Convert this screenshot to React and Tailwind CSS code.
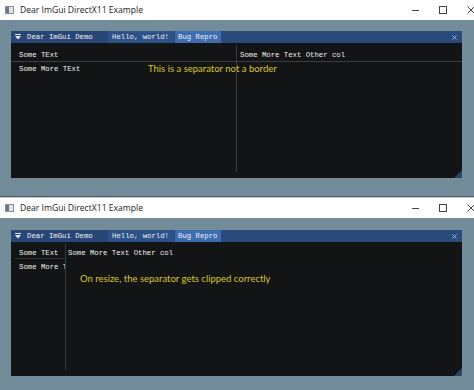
import React from "react";

const MONO = "font-[family-name:'Liberation_Mono',monospace] text-[7.3px]";
const SANS = "font-[family-name:'Open_Sans',sans-serif]";
const NOTE = "font-[family-name:Lato,sans-serif] text-[9.5px] leading-[10px] text-[#dcc42e] whitespace-nowrap";

const OsTitleBar = () => (
  <div className="h-[20px] bg-white flex items-center shrink-0">
    <svg width="9" height="8" viewBox="0 0 9 8" className="ml-[5px]">
      <rect x="0.5" y="0.5" width="8" height="7" fill="#dfe3e8" stroke="#8a9099" />
      <rect x="1" y="1" width="3" height="6" fill="#6d7682" />
    </svg>
    <span className={`ml-[6px] text-[8.6px] leading-[20px] text-[#1b1b1b] ${SANS}`}>
      Dear ImGui DirectX11 Example
    </span>
    <div className="ml-auto mr-[-1px] flex items-center gap-[20px]">
      <svg width="7" height="8" viewBox="0 0 7 8">
        <line x1="0" y1="4.5" x2="7" y2="4.5" stroke="#444" strokeWidth="1" />
      </svg>
      <svg width="8" height="8" viewBox="0 0 8 8">
        <rect x="0.5" y="0.5" width="7" height="7" fill="none" stroke="#444" strokeWidth="1" />
      </svg>
      <svg width="8" height="8" viewBox="0 0 8 8">
        <path d="M0.5 0.5 L7.5 7.5 M7.5 0.5 L0.5 7.5" stroke="#444" strokeWidth="1" />
      </svg>
    </div>
  </div>
);

const DockIcon = () => (
  <svg width="6" height="6" viewBox="0 0 6 6">
    <rect x="0" y="0" width="6" height="1" fill="#e8e8e8" />
    <path d="M0 2 L6 2 L3 5.5 Z" fill="#e8e8e8" />
  </svg>
);

const ImGuiTitleBar = () => (
  <div className={`h-[12px] bg-[#294a7a] flex items-stretch leading-[12px] text-[#f0f0f0] ${MONO}`}>
    <div className="w-[97px] flex items-center bg-[#284777]">
      <span className="ml-[4px] flex"><DockIcon /></span>
      <span className="ml-[6px] whitespace-nowrap">Dear ImGui Demo</span>
    </div>
    <div className="w-[66px] pl-[4px] bg-[#2d5289] whitespace-nowrap">Hello, world!</div>
    <div className="ml-[1px] w-[46px] pl-[3px] bg-[#3d6db1] whitespace-nowrap">Bug Repro</div>
    <div className="ml-auto mr-[5px] flex items-center">
      <svg width="5" height="5" viewBox="0 0 5 5">
        <path d="M0.5 0.5 L4.5 4.5 M4.5 0.5 L0.5 4.5" stroke="#a8bbd8" strokeWidth="1" />
      </svg>
    </div>
  </div>
);

const ResizeGrip = () => (
  <svg width="8" height="8" viewBox="0 0 8 8" className="absolute right-0 bottom-0">
    <path d="M8 0 L8 8 L0 8 Z" fill="#2a4462" />
  </svg>
);

const TopTable = () => (
  <div className={`relative flex-1 flex flex-col bg-[#131415] text-[#f2f2f2] leading-[10px] ${MONO}`}>
    <div className="h-[2px]" />
    <div className="flex border-b border-[#3c3d42] h-[17px]">
      <div className="w-[226px] shrink-0 border-r border-[#3a3b40] pl-[8px] pt-[5px] whitespace-nowrap">Some TExt</div>
      <div className="pl-[3px] pt-[5px] whitespace-nowrap">Some More Text Other col</div>
    </div>
    <div className="flex flex-1 mb-[6px]">
      <div className="w-[226px] shrink-0 border-r border-[#3a3b40] pl-[8px] pt-[2px] flex">
        <span className="w-[129px] shrink-0 whitespace-nowrap">Some More TExt</span>
        <span className={NOTE}>This is a separator not a border</span>
      </div>
      <div className="flex-1" />
    </div>
    <ResizeGrip />
  </div>
);

const BottomTable = () => (
  <div className={`relative flex-1 flex bg-[#131415] text-[#f2f2f2] leading-[10px] pt-[2px] pb-[6px] ${MONO}`}>
    <div className="w-[55px] shrink-0 border-r border-[#3a3b40] overflow-hidden flex flex-col">
      <div className="ml-[4px] pl-[4px] pt-[4px] h-[15px] border-b border-[#34353a] whitespace-nowrap">Some TExt</div>
      <div className="pl-[8px] pt-[3px] whitespace-nowrap">Some More TExt</div>
    </div>
    <div className="flex-1 flex flex-col">
      <div className="pl-[2px] pt-[4px] h-[15px] whitespace-nowrap">Some More Text Other col</div>
      <div className={`ml-[14px] mt-[15px] ${NOTE}`}>
        On resize, the separator gets clipped correctly
      </div>
    </div>
    <ResizeGrip />
  </div>
);

export default function App() {
  return (
    <div className="w-[474px] h-[390px] overflow-hidden flex flex-col bg-white">
      <div className="h-[196px] flex flex-col shrink-0">
        <OsTitleBar />
        <div className="flex-1 bg-[#738c99] pt-[11px] pl-[11px] pb-[18px]">
          <div className="w-[451px] h-full flex flex-col">
            <ImGuiTitleBar />
            <TopTable />
          </div>
        </div>
      </div>
      <div className="h-[1px] bg-[#4b555c] shrink-0" />
      <div className="h-[1px] bg-[#c9cdd0] shrink-0" />
      <div className="flex-1 flex flex-col">
        <OsTitleBar />
        <div className="flex-1 bg-[#738c99] pt-[12px] pl-[11px] pb-[14px]">
          <div className="w-[451px] h-full flex flex-col">
            <ImGuiTitleBar />
            <BottomTable />
          </div>
        </div>
      </div>
    </div>
  );
}
